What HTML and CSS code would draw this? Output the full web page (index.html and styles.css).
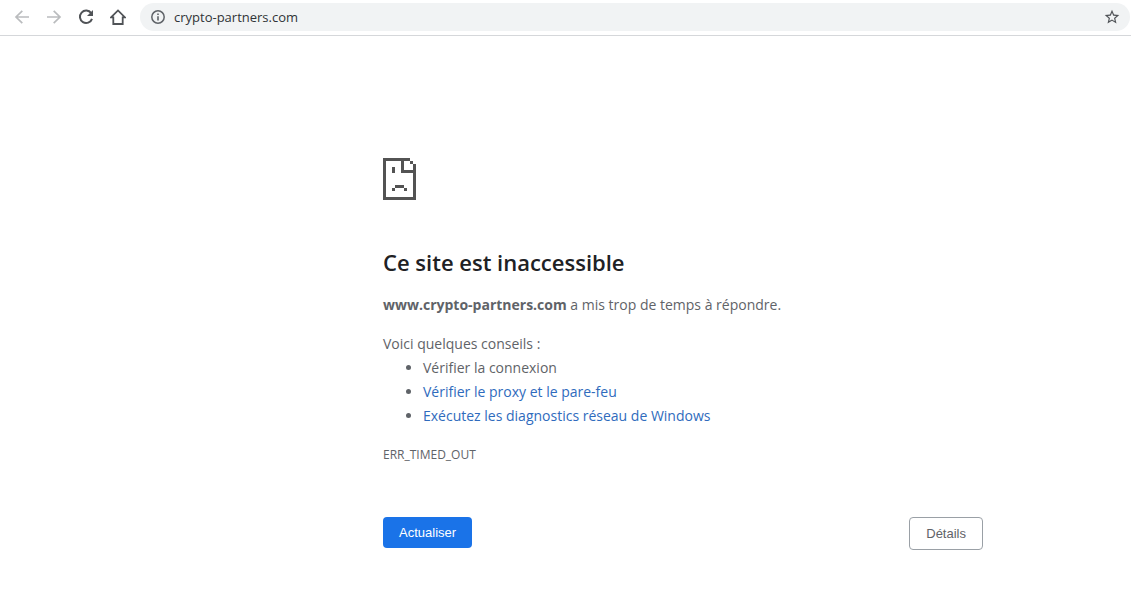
FILE: index.html
```
<!DOCTYPE html>
<html lang="fr">
<head>
    <meta charset="UTF-8">
    <meta name="viewport" content="width=device-width, initial-scale=1.0">
    <title>crypto-partners.com</title>
    <link rel="stylesheet" href="styles.css">
</head>
<body>

<header class="toolbar">
    <button type="button" class="nav-button disabled" aria-label="Précédent" disabled>
        <svg viewBox="0 0 16 16"><path d="M15 8H2.5M8.3 1.8L2 8L8.3 14.2" fill="none" stroke="currentColor" stroke-width="1.7"/></svg>
    </button>
    <button type="button" class="nav-button disabled" aria-label="Suivant" disabled>
        <svg viewBox="0 0 16 16"><path d="M1 8H13.5M7.7 1.8L14 8L7.7 14.2" fill="none" stroke="currentColor" stroke-width="1.7"/></svg>
    </button>
    <button type="button" class="nav-button" aria-label="Actualiser la page">
        <svg viewBox="0 0 16 16"><path d="M13.2 4.2A6.2 6.2 0 1 0 14 9.8" fill="none" stroke="currentColor" stroke-width="2"/><path d="M15 1V7H9z" fill="currentColor"/></svg>
    </button>
    <button type="button" class="nav-button" aria-label="Accueil">
        <svg viewBox="0 0 16 16"><path d="M1 8.4L8 1.4L15 8.4H12.7V15H3.3V8.4z" fill="none" stroke="currentColor" stroke-width="1.8"/></svg>
    </button>
    <div class="address-bar">
        <svg class="info-icon" viewBox="0 0 14 14"><circle cx="7" cy="7" r="6.2" fill="none" stroke="currentColor" stroke-width="1.5"/><path d="M6.2 3.4h1.6V5H6.2zM6.2 6.2h1.6v4.4H6.2z" fill="currentColor"/></svg>
        <input type="text" class="address" aria-label="Adresse" value="crypto-partners.com">
        <button type="button" class="star-button" aria-label="Ajouter aux favoris">
            <svg viewBox="1 1 22 22"><path d="M22 9.24l-7.19-.62L12 2 9.19 8.63 2 9.24l5.46 4.73L5.82 21 12 17.27 18.18 21l-1.63-7.03L22 9.24zM12 15.4l-3.76 2.27 1-4.28-3.32-2.88 4.38-.38L12 6.1l1.71 4.04 4.38.38-3.32 2.88 1 4.28L12 15.4z" fill="currentColor"/></svg>
        </button>
    </div>
</header>

<main class="error-page">
    <svg class="sad-icon" viewBox="0 0 11 14" shape-rendering="crispEdges">
        <path d="M0 0H9V1H7V4H11V14H0zM1 1V13H10V5H6V1zM9 1H10V2H11V4H10V2H9zM3 3H4V5H3zM4 9H7V10H4zM3 10H4V11H3zM7 10H8V11H7z" fill="currentColor" fill-rule="evenodd"/>
    </svg>
    <h1>Ce site est inaccessible</h1>
    <p class="summary"><strong>www.crypto-partners.com</strong> a mis trop de temps à répondre.</p>
    <p class="tips-title">Voici quelques conseils :</p>
    <ul class="tips">
        <li>Vérifier la connexion</li>
        <li><a href="#proxy">Vérifier le proxy et le pare-feu</a></li>
        <li><a href="#diagnostics">Exécutez les diagnostics réseau de Windows</a></li>
    </ul>
    <p class="error-code">ERR_TIMED_OUT</p>
    <div class="buttons">
        <button type="button" class="reload">Actualiser</button>
        <button type="button" class="details">Détails</button>
    </div>
</main>

</body>
</html>
```
FILE: styles.css
```
* {
    box-sizing: border-box;
}
body {
    margin: 0;
    background: #fff;
    color: #5f6368;
    font-family: "Open Sans", "Noto Sans", sans-serif;
    font-size: 14px;
    line-height: 24px;
}
button {
    cursor: pointer;
    font-family: "Liberation Sans", Arial, sans-serif;
}
.toolbar {
    display: flex;
    align-items: center;
    gap: 16px;
    height: 36px;
    padding: 0 1px 2px 14px;
    border-bottom: 1px solid #d5d7da;
}
.nav-button, .star-button {
    display: flex;
    flex: none;
    width: 16px;
    height: 16px;
    padding: 0;
    border: none;
    background: none;
    color: #505357;
}
.nav-button svg, .star-button svg {
    width: 100%;
    height: 100%;
}
.nav-button.disabled {
    color: #babcbe;
}
.address-bar {
    display: flex;
    flex: 1;
    align-items: center;
    gap: 9px;
    height: 28px;
    margin-left: -2px;
    padding: 0 10px 0 11px;
    border-radius: 14px;
    background: #f1f3f4;
}
.info-icon {
    flex: none;
    width: 14px;
    height: 14px;
}
.address {
    flex: 1;
    min-width: 0;
    padding: 0;
    border: none;
    outline: none;
    background: none;
    color: #303337;
    font-family: inherit;
    font-size: 13px;
}
.error-page {
    padding: 122px 148px 0 383px;
}
.sad-icon {
    display: block;
    width: 33px;
    height: 42px;
    color: #535353;
}
h1 {
    margin: 48px 0 16px;
    color: #202124;
    font-size: 22px;
    font-weight: 600;
    line-height: 29px;
}
p {
    margin: 0;
}
.summary {
    margin-bottom: 15px;
}
.tips {
    margin: 0 0 15px;
    padding-left: 40px;
}
.tips a {
    color: #2f6bbd;
    text-decoration: none;
}
.error-code {
    font-size: 12px;
}
.buttons {
    display: flex;
    align-items: flex-start;
    justify-content: space-between;
    margin-top: 50px;
}
.reload, .details {
    padding: 8px 16px;
    border-radius: 4px;
    font-size: 13px;
    line-height: 15px;
}
.reload {
    border: none;
    background: #1a73e8;
    color: #fff;
}
.details {
    border: 1px solid #9aa0a6;
    background: #fff;
    color: #5f6368;
}
```
